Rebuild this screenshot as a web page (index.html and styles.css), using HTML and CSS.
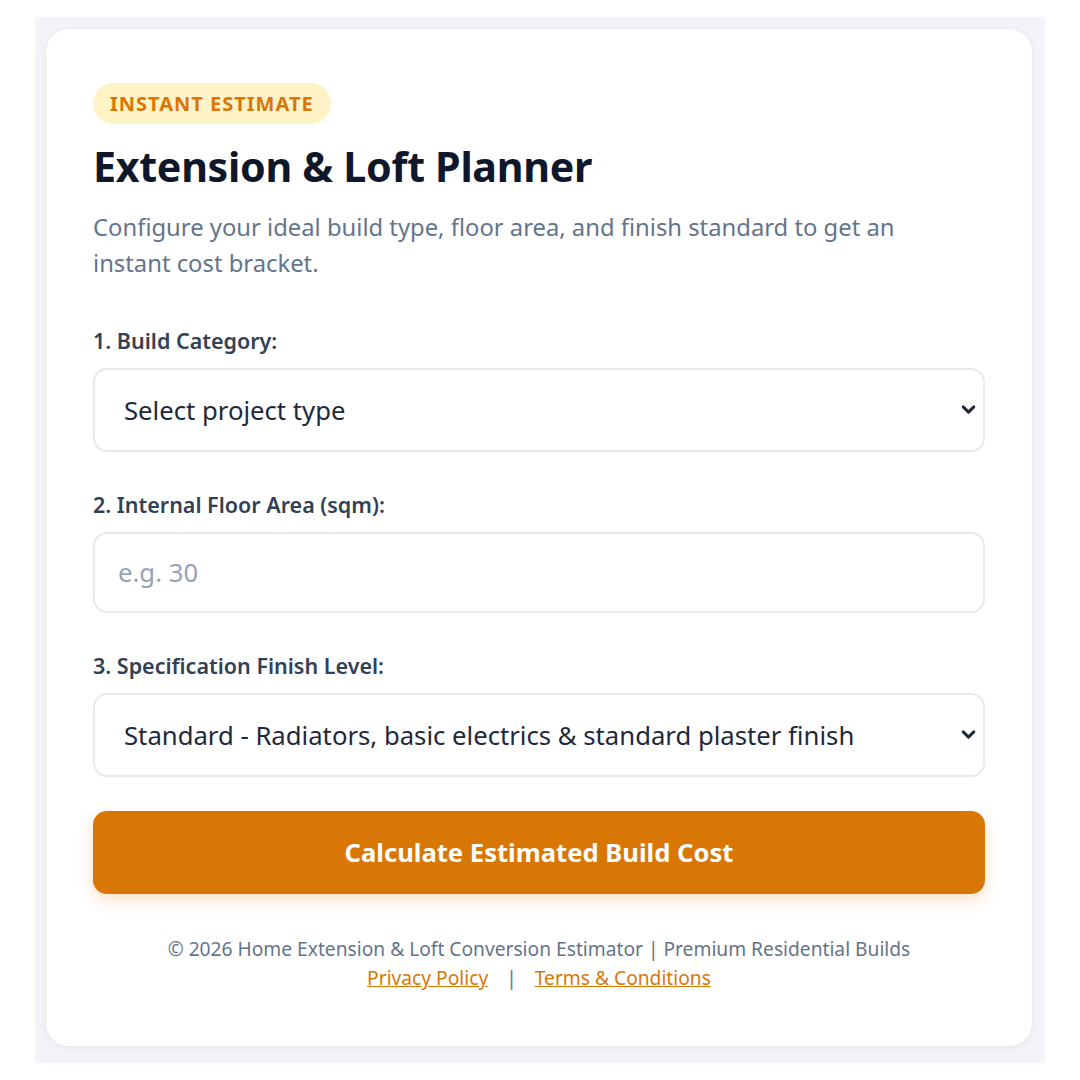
FILE: index.html
```
<!DOCTYPE html>
<html lang="en">
<head>
    <meta charset="UTF-8">
    <meta name="viewport" content="width=device-width, initial-scale=1.0">
    <title>Extension &amp; Loft Planner</title>
    <link rel="stylesheet" href="styles.css">
</head>
<body>
    <div class="page">
        <div class="card">
            <span class="badge">Instant Estimate</span>
            <h1>Extension &amp; Loft Planner</h1>
            <p class="intro">Configure your ideal build type, floor area, and finish standard to get an instant cost bracket.</p>

            <form class="planner">
                <div class="field">
                    <label for="buildType">1. Build Category:</label>
                    <div class="select-wrap">
                        <select id="buildType">
                            <option>Select project type</option>
                            <option>Single Storey Rear Extension</option>
                            <option>Double Storey Extension</option>
                            <option>Loft Conversion</option>
                        </select>
                        <svg class="chevron" viewBox="0 0 16 16"><path d="M3 5.5l5 5 5-5" fill="none" stroke="currentColor" stroke-width="2.8" stroke-linecap="round" stroke-linejoin="round"/></svg>
                    </div>
                </div>

                <div class="field">
                    <label for="floorArea">2. Internal Floor Area (sqm):</label>
                    <input type="number" id="floorArea" placeholder="e.g. 30">
                </div>

                <div class="field">
                    <label for="finish">3. Specification Finish Level:</label>
                    <div class="select-wrap">
                        <select id="finish">
                            <option>Standard - Radiators, basic electrics &amp; standard plaster finish</option>
                            <option>Premium</option>
                            <option>Luxury</option>
                        </select>
                        <svg class="chevron" viewBox="0 0 16 16"><path d="M3 5.5l5 5 5-5" fill="none" stroke="currentColor" stroke-width="2.8" stroke-linecap="round" stroke-linejoin="round"/></svg>
                    </div>
                </div>

                <button type="button" class="calc-btn">Calculate Estimated Build Cost</button>
            </form>

            <footer class="footer">
                <div>&copy; 2026 Home Extension &amp; Loft Conversion Estimator | Premium Residential Builds</div>
                <div><a href="#">Privacy Policy</a><span class="sep">|</span><a href="#">Terms &amp; Conditions</a></div>
            </footer>
        </div>
    </div>
</body>
</html>
```

FILE: styles.css
```
* {
    box-sizing: border-box;
}

body {
    margin: 0;
    padding: 17px 35px 0;
    background-color: #ffffff;
    font-family: "Noto Sans", "Open Sans", sans-serif;
    color: #0f172a;
}

.page {
    background-color: #f3f4f7;
    padding: 11px 12px 16px 10px;
}

.card {
    background-color: #ffffff;
    border: 1px solid #e8eaef;
    border-radius: 24px;
    padding: 54px 47px 54px;
    box-shadow: 0 2px 8px rgba(15, 23, 42, 0.04);
}

.badge {
    display: inline-block;
    background-color: #fef3c7;
    color: #d97706;
    font-size: 20px;
    font-weight: 700;
    letter-spacing: 1px;
    text-transform: uppercase;
    padding: 7px 17px;
    border-radius: 999px;
    line-height: 27px;
}

h1 {
    font-size: 41.2px;
    font-weight: 700;
    color: #0f172a;
    margin: 18px 0 18px;
    line-height: 1.2;
    letter-spacing: -0.3px;
}

.intro {
    max-width: 830px;
    color: #64748b;
    font-size: 23.8px;
    line-height: 36px;
    margin: 0 0 45px;
}

.planner {
    display: flex;
    flex-direction: column;
}

.field {
    display: flex;
    flex-direction: column;
    margin-bottom: 38px;
}

label {
    font-size: 21.5px;
    font-weight: 600;
    color: #334155;
    margin-bottom: 12px;
    line-height: 30px;
}

.select-wrap {
    position: relative;
}

select, input {
    width: 100%;
    font-family: inherit;
    font-size: 25.7px;
    color: #1e293b;
    background-color: #ffffff;
    border: 2px solid #e5e9f0;
    border-radius: 14px;
    outline: none;
}

select {
    -webkit-appearance: none;
    appearance: none;
    height: 84px;
    padding: 0 60px 0 29px;
}

input {
    height: 81px;
    padding: 0 23px;
}

input::placeholder {
    color: #94a3b8;
}

.chevron {
    position: absolute;
    right: 8px;
    top: 50%;
    width: 17px;
    height: 17px;
    margin-top: -9px;
    color: #1e293b;
    pointer-events: none;
}

.calc-btn {
    margin-top: -4px;
    height: 83px;
    background-color: #d97706;
    color: #ffffff;
    border: none;
    border-radius: 14px;
    font-family: inherit;
    font-size: 25.6px;
    font-weight: 700;
    cursor: pointer;
    box-shadow: 0 6px 16px rgba(217, 119, 6, 0.22);
}

.footer {
    margin-top: 40px;
    text-align: center;
    color: #64748b;
    font-size: 19.2px;
    line-height: 29px;
}

.footer a {
    color: #d97706;
}

.sep {
    margin: 0 18px;
}
```
